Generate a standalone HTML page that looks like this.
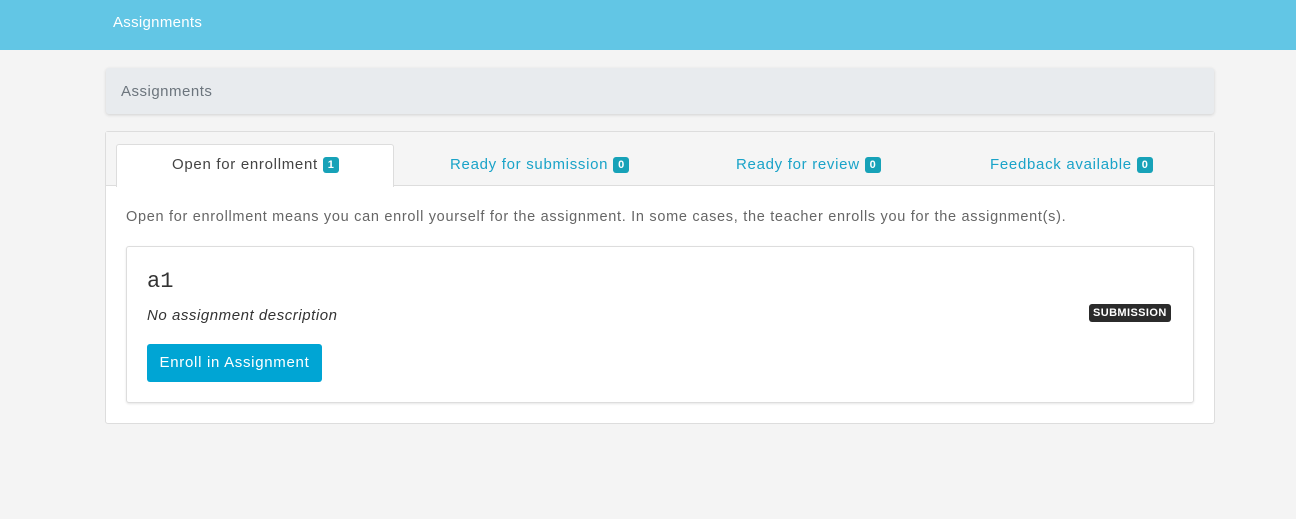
<!DOCTYPE html>
<html><head><style>
*{box-sizing:border-box;margin:0;padding:0}
body{width:1296px;height:519px;background:#f4f4f4;font-family:"Liberation Sans",sans-serif;color:#555;position:relative;overflow:hidden;letter-spacing:0.7px}
.nav{position:absolute;left:0;top:0;width:1296px;height:50px;background:#62c6e5}
.nav span{position:absolute;left:113px;top:14px;color:#fff;font-size:15px;letter-spacing:0.3px}
.crumb{position:absolute;left:106px;top:68px;width:1108px;height:46px;background:#e8ebee;border-radius:3px;box-shadow:0 1px 3px rgba(0,0,0,.15)}
.crumb span{position:absolute;left:15px;top:15px;font-size:15px;color:#6c757d;letter-spacing:0.5px}
.panel{position:absolute;left:105px;top:131px;width:1110px;height:293px;background:#fff;border:1px solid #ddd;border-radius:3px}
.tabs{position:absolute;left:0;top:0;width:1108px;height:54px;background:#f5f5f5;border-bottom:1px solid #ddd}
.tab{position:absolute;top:24px;font-size:15px;color:#1aa3c8;white-space:nowrap}
.active{position:absolute;left:10px;top:12px;width:278px;height:43px;background:#fff;border:1px solid #ddd;border-bottom:none;border-radius:3px 3px 0 0}
.b{display:inline-block;background:#17a2b8;color:#fff;font-size:11px;font-weight:bold;padding:2px 5px;border-radius:3px;vertical-align:1px;letter-spacing:0}
.desc{position:absolute;left:20px;top:77px;font-size:14.5px;color:#666}
.card{position:absolute;left:20px;top:114px;width:1068px;height:157px;border:1px solid #ddd;border-radius:3px;box-shadow:0 1px 2px rgba(0,0,0,.1)}
.t{position:absolute;left:20px;top:22px;font-family:"Liberation Mono",monospace;font-size:22px;color:#333;letter-spacing:0}
.nd{position:absolute;left:20px;top:60px;font-style:italic;font-size:15px;color:#333;letter-spacing:0.55px}
.btn{position:absolute;left:20px;top:97px;width:175px;height:38px;background:#00a5d4;color:#fff;border-radius:3px;font-size:15px;text-align:center;line-height:38px}
.sub{position:absolute;left:962px;top:57px;background:#2b2b2b;color:#fff;font-size:11px;font-weight:bold;padding:3px 4px;border-radius:3px;letter-spacing:0.4px}
</style></head><body>
<div class="nav"><span>Assignments</span></div>
<div class="crumb"><span>Assignments</span></div>
<div class="panel">
<div class="tabs">
<div class="active"></div>
<div class="tab" style="left:66px;color:#444">Open for enrollment <span class="b">1</span></div>
<div class="tab" style="left:344px">Ready for submission <span class="b">0</span></div>
<div class="tab" style="left:630px">Ready for review <span class="b">0</span></div>
<div class="tab" style="left:884px">Feedback available <span class="b">0</span></div>
</div>
<div class="desc">Open for enrollment means you can enroll yourself for the assignment. In some cases, the teacher enrolls you for the assignment(s).</div>
<div class="card">
<div class="t">a1</div>
<div class="nd">No assignment description</div>
<div class="sub">SUBMISSION</div>
<div class="btn">Enroll in Assignment</div>
</div>
</div>
</body></html>
